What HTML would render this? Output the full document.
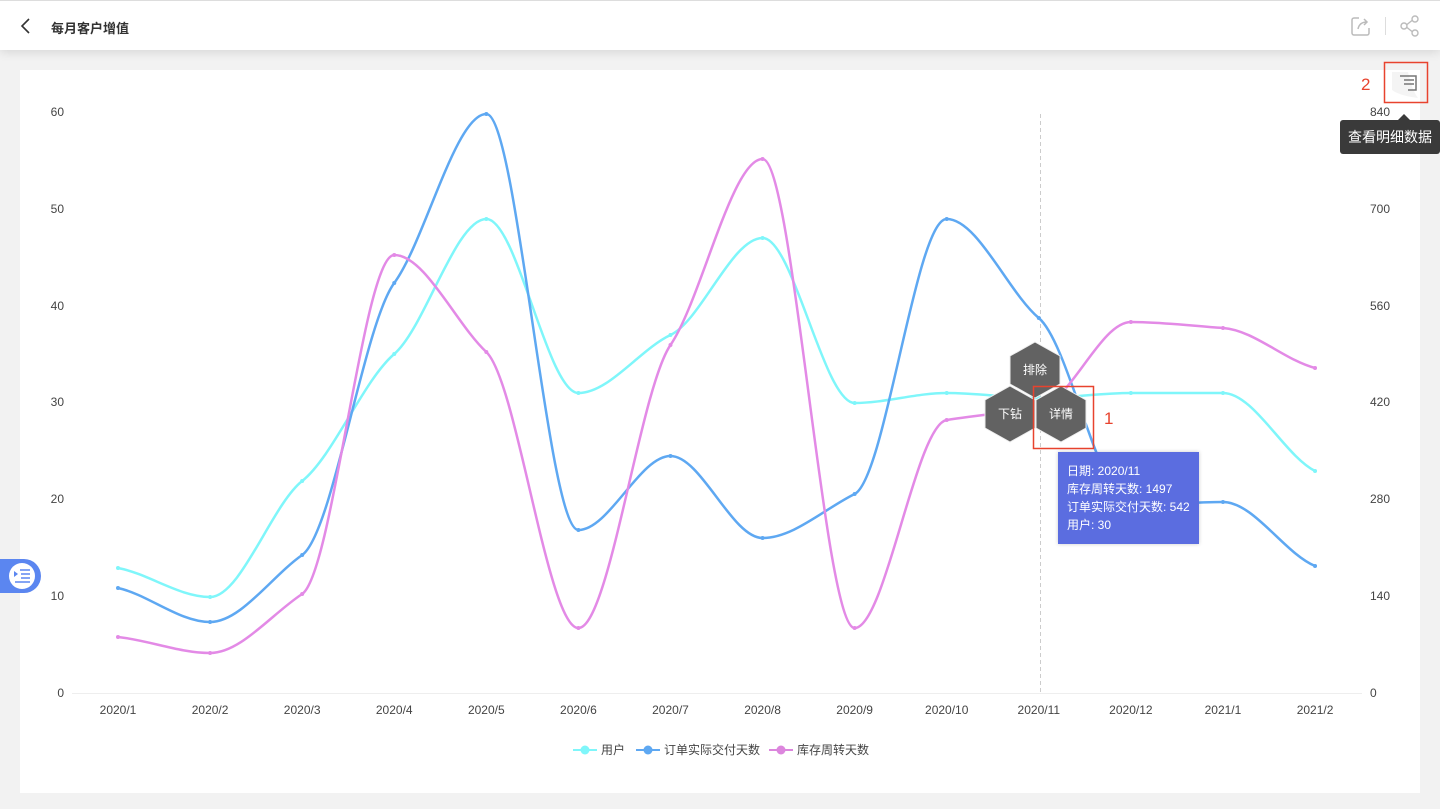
<!DOCTYPE html>
<html><head><meta charset="utf-8">
<style>
*{margin:0;padding:0;box-sizing:border-box}
body{width:1440px;height:809px;background:#f2f2f2;font-family:"Liberation Sans","Noto Sans CJK SC",sans-serif;position:relative;overflow:hidden}
.hdr{position:absolute;left:0;top:0;width:1440px;height:50px;background:#fff;box-shadow:0 2px 10px rgba(0,0,0,.12);border-top:1px solid #ddd}
.title{position:absolute;left:51px;top:17px;font-size:13px;color:#333;font-weight:bold}
.card{position:absolute;left:20px;top:70px;width:1400px;height:723px;background:#fff}
svg text{font-family:"Liberation Sans","Noto Sans CJK SC",sans-serif}
.tip{position:absolute;left:1058px;top:452px;height:92px;background:#5b6de0;color:#fff;font-size:12px;line-height:18px;padding:10px 9px;white-space:nowrap;box-shadow:0 0 4px rgba(0,0,0,.2)}
.tt{position:absolute;left:1340px;top:120px;width:100px;height:34px;background:#3a3a3a;color:#fff;font-size:14px;line-height:34px;text-align:center;border-radius:3px}
.tt:before{content:"";position:absolute;left:58px;top:-6px;border:6px solid transparent;border-top:0;border-bottom-color:#3a3a3a}
</style></head><body>
<div class="hdr">
<svg style="position:absolute;left:18px;top:16px" width="14" height="18"><path d="M11 2 L4 9 L11 16" stroke="#333" stroke-width="1.6" fill="none"/></svg>
<div class="title">每月客户增值</div>
<svg style="position:absolute;left:1350px;top:14px" width="22" height="22"><path d="M9 3H4a2 2 0 0 0-2 2v13a2 2 0 0 0 2 2h13a2 2 0 0 0 2-2v-5" stroke="#bbb" stroke-width="1.5" fill="none"/><path d="M8 14c1-5 4-7 9-7M14 4l3 3-3 3" stroke="#bbb" stroke-width="1.5" fill="none"/></svg>
<div style="position:absolute;left:1385px;top:16px;width:1px;height:18px;background:#ddd"></div>
<svg style="position:absolute;left:1399px;top:14px" width="22" height="22"><circle cx="16" cy="4" r="3" stroke="#bbb" stroke-width="1.4" fill="none"/><circle cx="16" cy="18" r="3" stroke="#bbb" stroke-width="1.4" fill="none"/><circle cx="5" cy="11" r="3" stroke="#bbb" stroke-width="1.4" fill="none"/><path d="M8 9.5l5-4M8 12.5l5 4" stroke="#bbb" stroke-width="1.4"/></svg>
</div>
<div class="card"></div>
<svg id="ch" style="position:absolute;left:0;top:0" width="1440" height="809">
<g font-size="12" fill="#444">
<text x="64" y="116" text-anchor="end">60</text><text x="64" y="213" text-anchor="end">50</text><text x="64" y="310" text-anchor="end">40</text><text x="64" y="406" text-anchor="end">30</text><text x="64" y="503" text-anchor="end">20</text><text x="64" y="600" text-anchor="end">10</text><text x="64" y="697" text-anchor="end">0</text>
<text x="1370" y="116">840</text><text x="1370" y="213">700</text><text x="1370" y="310">560</text><text x="1370" y="406">420</text><text x="1370" y="503">280</text><text x="1370" y="600">140</text><text x="1370" y="697">0</text>
</g>
<line x1="72" y1="693.5" x2="1362" y2="693.5" stroke="#eee"/>
<line x1="1040.5" y1="114" x2="1040.5" y2="693" stroke="#ccc" stroke-dasharray="4,3"/>
<g id="xl" font-size="12" fill="#444" text-anchor="middle"></g>
<g id="lines"></g>
<g font-size="12" fill="#444">
<line x1="573" y1="750" x2="597" y2="750" stroke="#7ff6fa" stroke-width="2"/><circle cx="585" cy="750" r="4.5" fill="#7ff6fa"/><text x="601" y="754">用户</text>
<line x1="636" y1="750" x2="660" y2="750" stroke="#5ea8f2" stroke-width="2"/><circle cx="648" cy="750" r="4.5" fill="#5ea8f2"/><text x="664" y="754">订单实际交付天数</text>
<line x1="769" y1="750" x2="793" y2="750" stroke="#dc86dd" stroke-width="2"/><circle cx="781" cy="750" r="4.5" fill="#dc86dd"/><text x="797" y="754">库存周转天数</text>
</g>
<g stroke="#eee" stroke-width="1" fill="#626262">
<polygon points="1035,342 1060,356 1060,384 1035,398 1010,384 1010,356"/>
<polygon points="1010,386 1035,400 1035,428 1010,442 985,428 985,400"/>
<polygon points="1061,386 1086,400 1086,428 1061,442 1036,428 1036,400"/>
</g>
<g font-size="12" fill="#fff" text-anchor="middle"><text x="1035" y="374">排除</text><text x="1010" y="418">下钻</text><text x="1061" y="418">详情</text></g>
<rect x="1033.5" y="386.5" width="60" height="62" fill="none" stroke="#e8432e" stroke-width="1.5"/>
<text x="1104" y="424" font-size="17" fill="#e8432e">1</text>
<text x="1361" y="90" font-size="17" fill="#e8432e">2</text>
<path d="M1392 72 L1408 72 Q1412 90 1418 98 Q1400 96 1392 90 Z" fill="#f4f4f4"/>
<g stroke="#777" stroke-width="1.5" fill="none"><path d="M1400 76h16v14h-8M1404 80h10M1404 84h10"/></g>
<rect x="1384.5" y="62.5" width="43" height="40" fill="none" stroke="#e8432e" stroke-width="1.5"/>
</svg>
<div class="tip">日期: 2020/11<br>库存周转天数: 1497<br>订单实际交付天数: 542<br>用户: 30</div>
<div class="tt">查看明细数据</div>
<div style="position:absolute;left:0;top:559px;width:41px;height:34px;background:#5b86f0;border-radius:0 17px 17px 0"></div>
<div style="position:absolute;left:9px;top:563px;width:26px;height:26px;background:#fff;border-radius:50%"></div>
<svg style="position:absolute;left:13px;top:568px" width="18" height="16"><path d="M1 3l4 3-4 3z" fill="#5b86f0"/><path d="M7 2h10M8 6h9M8 10h9M2 14h15" stroke="#5b86f0" stroke-width="1.5"/></svg>
<script>
var xs=[];for(var i=0;i<14;i++)xs.push(118+i*92.08);
var labs=["2020/1","2020/2","2020/3","2020/4","2020/5","2020/6","2020/7","2020/8","2020/9","2020/10","2020/11","2020/12","2021/1","2021/2"];
var ns="http://www.w3.org/2000/svg",xl=document.getElementById("xl"),lg=document.getElementById("lines");
labs.forEach(function(l,i){var t=document.createElementNS(ns,"text");t.setAttribute("x",xs[i]);t.setAttribute("y",714);t.textContent=l;xl.appendChild(t);});
function path(ys){var n=ys.length,h=xs[1]-xs[0],d=[],m=[];
for(var i=0;i<n-1;i++)d.push((ys[i+1]-ys[i])/h);
for(var i=0;i<n;i++){if(i==0)m.push(d[0]*0.6);else if(i==n-1)m.push(d[n-2]*0.6);
else if(d[i-1]*d[i]<=0)m.push(0);else{var a=d[i-1],b=d[i];m.push(0.6*2*a*b/(a+b));}}
var s="M"+xs[0]+","+ys[0];
for(var i=0;i<n-1;i++){s+=" C"+(xs[i]+h/3)+","+(ys[i]+m[i]*h/3)+" "+(xs[i+1]-h/3)+","+(ys[i+1]-m[i+1]*h/3)+" "+xs[i+1]+","+ys[i+1];}
return s;}
function add(ys,c){var e=document.createElementNS(ns,"path");e.setAttribute("d",path(ys));e.setAttribute("stroke",c);e.setAttribute("stroke-width","2.5");e.setAttribute("fill","none");lg.appendChild(e);
ys.forEach(function(y,i){var ci=document.createElementNS(ns,"circle");ci.setAttribute("cx",xs[i]);ci.setAttribute("cy",y);ci.setAttribute("r",2);ci.setAttribute("fill",c);lg.appendChild(ci);});}
add([568,597,481,354,219,393,335,238,403,393,398,393,393,471],"#7ff6fa");
add([588,622,555,283,114,530,456,538,494,219,318,505,502,566],"#5ea8f2");
add([637,653,594,255,352,628,345,159,628,420,408,322,328,368],"#e38ae6");
</script>
</body></html>
